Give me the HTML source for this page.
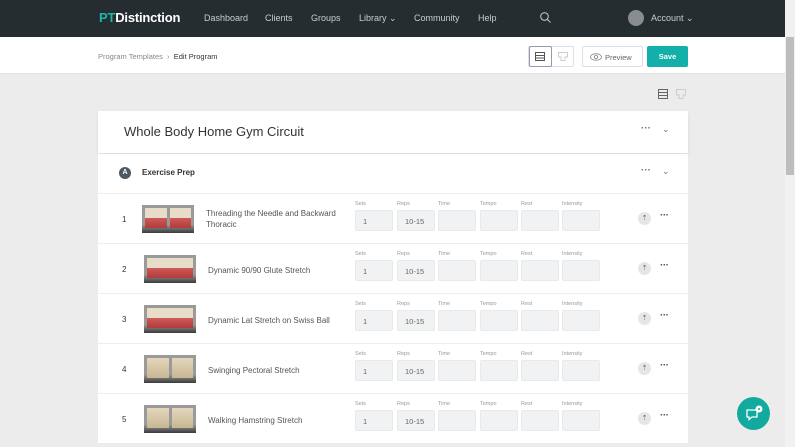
<!DOCTYPE html>
<html><head><style>
*{box-sizing:border-box;margin:0;padding:0}
body{width:795px;height:447px;overflow:hidden;background:#ececed;font-family:"Liberation Sans",sans-serif;position:relative;color:#333}
.nav{position:absolute;left:0;top:0;width:785px;height:37px;background:#262d31;color:#c9ccce;font-size:9px}
.nav span{position:absolute;top:13px}
.logo{position:absolute;left:99px;top:10px;font-size:13px;font-weight:bold;color:#fff;letter-spacing:-0.2px}
.logo b{color:#1fb5ad}
.sub{position:absolute;left:0;top:37px;width:785px;height:37px;background:#fff;border-bottom:1px solid #e2e4e6}
.sb{position:absolute;right:0;top:0;width:10px;height:447px;background:#f1f1f1}
.sb i{position:absolute;left:1px;top:37px;width:8px;height:138px;background:#bdbdbd}
.card{position:absolute;left:98px;width:590px;background:#fff}
.row{position:absolute;left:98px;width:590px;height:50px;background:#fff;border-top:1px solid #eee}
.num{position:absolute;left:24px;top:21px;font-size:8px;color:#333}
.thumb{position:absolute;left:44px;top:11px;width:52px;height:28px;background:linear-gradient(#9a9a9a 70%,#3a3a3a);display:flex;gap:3px;padding:3px 3px 5px}
.thumb div{flex:1;background:linear-gradient(#e6dcc8 50%,#cf5a5a 50%,#b23a3a)}
.name{position:absolute;left:108px;font-size:8px;color:#555;line-height:11px;width:140px}
.f{position:absolute;top:7px;font-size:5.5px;color:#999}
.f div{margin-top:3px;width:38px;height:21px;background:#f1f2f3;border:1px solid #e8e9ea;border-radius:2px;font-size:7.5px;color:#666;padding:6px 0 0 7px}
.ic{position:absolute;left:540px;top:18px;width:13px;height:13px;border-radius:50%;background:#e4e6e8;font-size:7px;color:#666;text-align:center;line-height:13px}
.dots{position:absolute;left:562px;top:16px;font-size:10px;font-weight:bold;color:#555;letter-spacing:-0.5px}
</style></head><body>
<div class="nav">
<div class="logo"><b>PT</b>Distinction</div>
<span style="left:204px">Dashboard</span><span style="left:265px">Clients</span><span style="left:311px">Groups</span><span style="left:359px">Library ⌄</span><span style="left:414px">Community</span><span style="left:478px">Help</span>
<svg style="position:absolute;left:540px;top:12px" width="11" height="11" viewBox="0 0 11 11"><circle cx="4.5" cy="4.5" r="3.8" fill="none" stroke="#bbb" stroke-width="1.1"/><path d="M7.3 7.3L10.5 10.5" stroke="#bbb" stroke-width="1.1"/></svg>
<div style="position:absolute;left:628px;top:10px;width:16px;height:16px;border-radius:50%;background:#8a8d90"></div>
<span style="left:651px">Account ⌄</span>
</div>
<div class="sub">
<span style="position:absolute;left:98px;top:15px;font-size:7.5px;color:#888">Program Templates &nbsp;›&nbsp; <b style="font-weight:normal;color:#333">Edit Program</b></span>
<div style="position:absolute;left:528px;top:9px;width:46px;height:21px;border:1px solid #dde;border-radius:2px"><div style="position:absolute;left:0;top:-1px;width:23px;height:21px;border:1px solid #99a;border-radius:2px"></div>
<svg style="position:absolute;left:6px;top:5px" width="10" height="9"><rect x=".5" y=".5" width="9" height="8" fill="none" stroke="#555"/><path d="M0 3.5H10M0 6H10" stroke="#555"/></svg>
<svg style="position:absolute;left:29px;top:5px" width="10" height="9"><path d="M.5 .5H9.5V5H7V8.5H3V5H.5Z" fill="none" stroke="#ccc"/></svg></div>
<div style="position:absolute;left:582px;top:9px;width:61px;height:21px;border:1px solid #dde;border-radius:2px;font-size:7.5px;color:#666;padding:6px 0 0 22px">Preview</div>
<svg style="position:absolute;left:590px;top:16px" width="12" height="8"><ellipse cx="6" cy="4" rx="5.5" ry="3.3" fill="none" stroke="#888" stroke-width=".8"/><circle cx="6" cy="4" r="1.6" fill="none" stroke="#888" stroke-width=".8"/></svg>
<div style="position:absolute;left:647px;top:9px;width:41px;height:21px;background:#12b0a8;border-radius:2px;color:#fff;font-size:7.5px;font-weight:bold;text-align:center;line-height:21px">Save</div>
</div>
<svg style="position:absolute;left:658px;top:89px" width="10" height="10"><rect x=".5" y=".5" width="9" height="9" fill="none" stroke="#666"/><path d="M0 3.5H10M0 6.5H10" stroke="#666"/></svg>
<svg style="position:absolute;left:676px;top:89px" width="10" height="10"><path d="M.5 .5H9.5V6H7V9.5H3V6H.5Z" fill="none" stroke="#ccc"/></svg>
<div class="card" style="top:111px;height:42px;box-shadow:0 2px 4px rgba(0,0,0,.08)"><span style="position:absolute;left:26px;top:13px;font-size:13px;color:#333">Whole Body Home Gym Circuit</span><span style="position:absolute;left:543px;top:12px;font-size:10px;font-weight:bold;color:#777">···</span><span style="position:absolute;left:564px;top:13px;font-size:9px;color:#777">⌄</span></div>
<div class="card" style="top:154px;height:39px"><div style="position:absolute;left:21px;top:13px;width:12px;height:12px;border-radius:50%;background:#4d5a63;color:#fff;font-size:7px;font-weight:bold;text-align:center;line-height:12px">A</div><span style="position:absolute;left:44px;top:14px;font-size:8px;color:#333;font-weight:bold">Exercise Prep</span><span style="position:absolute;left:543px;top:11px;font-size:10px;font-weight:bold;color:#777">···</span><span style="position:absolute;left:564px;top:12px;font-size:9px;color:#777">⌄</span></div>

<div class="row" style="top:193px"><div class="num">1</div><div class="thumb"><div></div><div></div></div><div class="name" style="top:14px">Threading the Needle and Backward Thoracic</div>
<div class="f" style="left:257px">Sets<div>1</div></div><div class="f" style="left:299px">Reps<div>10-15</div></div><div class="f" style="left:340px">Time<div></div></div><div class="f" style="left:382px">Tempo<div></div></div><div class="f" style="left:423px">Rest<div></div></div><div class="f" style="left:464px">Intensity<div></div></div><div class="ic">⇡</div><div class="dots">···</div></div>
<div class="row" style="top:243px"><div class="num">2</div><div class="thumb" style="left:46px"><div></div></div><div class="name" style="top:21px;left:110px">Dynamic 90/90 Glute Stretch</div>
<div class="f" style="left:257px">Sets<div>1</div></div><div class="f" style="left:299px">Reps<div>10-15</div></div><div class="f" style="left:340px">Time<div></div></div><div class="f" style="left:382px">Tempo<div></div></div><div class="f" style="left:423px">Rest<div></div></div><div class="f" style="left:464px">Intensity<div></div></div><div class="ic">⇡</div><div class="dots">···</div></div>
<div class="row" style="top:293px"><div class="num">3</div><div class="thumb" style="left:46px"><div></div></div><div class="name" style="top:21px;left:110px">Dynamic Lat Stretch on Swiss Ball</div>
<div class="f" style="left:257px">Sets<div>1</div></div><div class="f" style="left:299px">Reps<div>10-15</div></div><div class="f" style="left:340px">Time<div></div></div><div class="f" style="left:382px">Tempo<div></div></div><div class="f" style="left:423px">Rest<div></div></div><div class="f" style="left:464px">Intensity<div></div></div><div class="ic">⇡</div><div class="dots">···</div></div>
<div class="row" style="top:343px"><div class="num">4</div><div class="thumb" style="left:46px"><div style="background:linear-gradient(#e2d6bd,#c9b792)"></div><div style="background:linear-gradient(#e2d6bd,#c9b792)"></div></div><div class="name" style="top:21px;left:110px">Swinging Pectoral Stretch</div>
<div class="f" style="left:257px">Sets<div>1</div></div><div class="f" style="left:299px">Reps<div>10-15</div></div><div class="f" style="left:340px">Time<div></div></div><div class="f" style="left:382px">Tempo<div></div></div><div class="f" style="left:423px">Rest<div></div></div><div class="f" style="left:464px">Intensity<div></div></div><div class="ic">⇡</div><div class="dots">···</div></div>
<div class="row" style="top:393px"><div class="num">5</div><div class="thumb" style="left:46px"><div style="background:linear-gradient(#e2d6bd,#c9b792)"></div><div style="background:linear-gradient(#e2d6bd,#c9b792)"></div></div><div class="name" style="top:21px;left:110px">Walking Hamstring Stretch</div>
<div class="f" style="left:257px">Sets<div>1</div></div><div class="f" style="left:299px">Reps<div>10-15</div></div><div class="f" style="left:340px">Time<div></div></div><div class="f" style="left:382px">Tempo<div></div></div><div class="f" style="left:423px">Rest<div></div></div><div class="f" style="left:464px">Intensity<div></div></div><div class="ic">⇡</div><div class="dots">···</div></div>

<div style="position:absolute;left:737px;top:397px;width:33px;height:33px;border-radius:50%;background:#12a99f"></div>
<svg style="position:absolute;left:745px;top:404px" width="20" height="18"><path d="M2 6H12V13H7L4 15.5V13H2Z" fill="none" stroke="#fff" stroke-width="1.3"/><circle cx="14" cy="5" r="3.5" fill="#fff"/><circle cx="14" cy="5" r="1" fill="#12a99f"/></svg>
<div class="sb"><i></i></div>
</body></html>
